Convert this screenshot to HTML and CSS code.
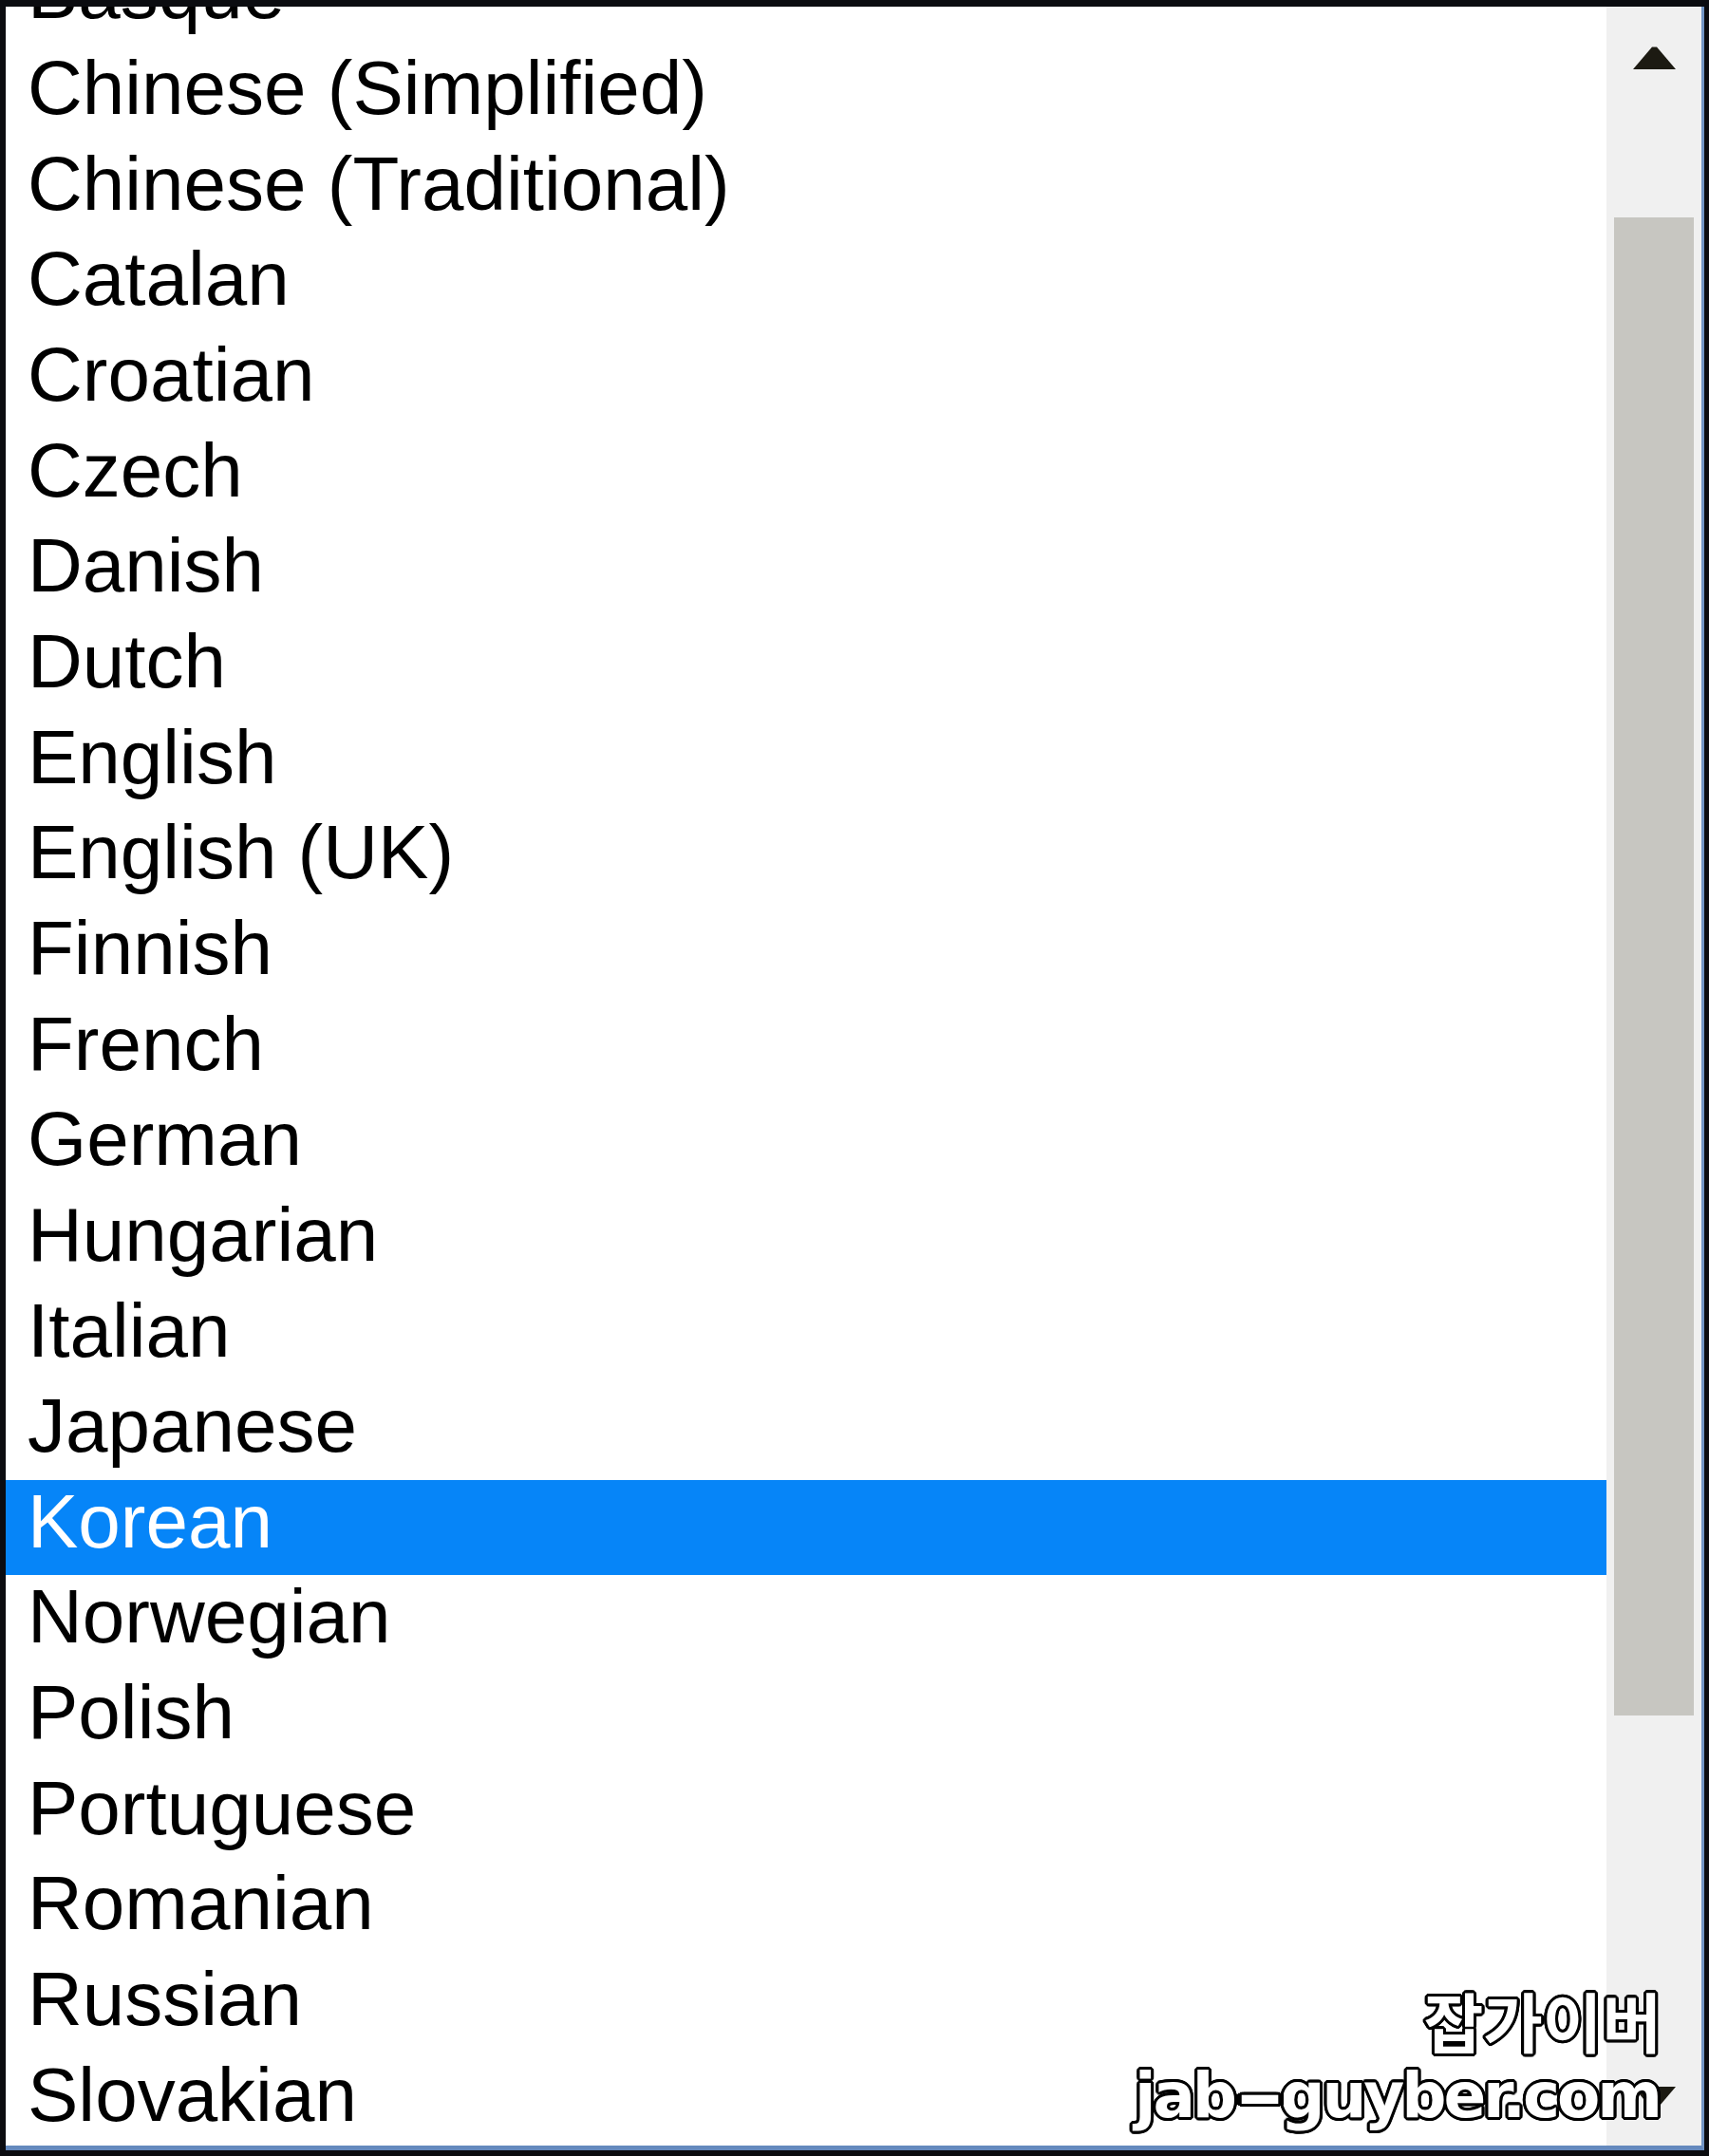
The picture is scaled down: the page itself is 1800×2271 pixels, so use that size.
FILE: index.html
```html
<!DOCTYPE html>
<html lang="en">
<head>
<meta charset="utf-8">
<title>Language list</title>
<link rel="stylesheet" href="styles.css">
</head>
<body>
<div class="frame">
  <div class="window">
    <ul class="list">
      <li class="item">Basque</li>
      <li class="item">Chinese (Simplified)</li>
      <li class="item">Chinese (Traditional)</li>
      <li class="item">Catalan</li>
      <li class="item">Croatian</li>
      <li class="item">Czech</li>
      <li class="item">Danish</li>
      <li class="item">Dutch</li>
      <li class="item">English</li>
      <li class="item">English (UK)</li>
      <li class="item">Finnish</li>
      <li class="item">French</li>
      <li class="item">German</li>
      <li class="item">Hungarian</li>
      <li class="item">Italian</li>
      <li class="item">Japanese</li>
      <li class="item item-selected">Korean</li>
      <li class="item">Norwegian</li>
      <li class="item">Polish</li>
      <li class="item">Portuguese</li>
      <li class="item">Romanian</li>
      <li class="item">Russian</li>
      <li class="item">Slovakian</li>
    </ul>
    <div class="scrollbar">
      <div class="sb-btn sb-up">
        <svg class="sb-arrow" width="45" height="25" viewBox="0 0 45 25"><polygon points="0,25 20,1.5 25,1.5 45,25" fill="#1c1a12"/></svg>
      </div>
      <div class="sb-track">
        <div class="sb-thumb"></div>
      </div>
      <div class="sb-btn sb-down">
        <svg class="sb-arrow" width="45" height="25" viewBox="0 0 45 25"><polygon points="0,0 45,0 25,23.5 20,23.5" fill="#1c1a12"/></svg>
      </div>
    </div>
  </div>
  <div class="watermark">
    <div class="wm-ko">잡가이버</div>
    <div class="wm-en">jab<span class="wm-dash">-</span>guyber.com</div>
  </div>
</div>
</body>
</html>
```

FILE: styles.css
```css
html, body {
  margin: 0;
  padding: 0;
  background: #0b0c10;
}

body {
  width: 1800px;
  height: 2271px;
  overflow: hidden;
}

.frame {
  position: relative;
  box-sizing: border-box;
  width: 1800px;
  height: 2271px;
  padding: 7px 5px 6px 6px;
  background: #0b0c10;
}

.window {
  display: flex;
  height: 100%;
  box-sizing: border-box;
  background: #ffffff;
  border-right: 3px solid #7194c4;
  border-bottom: 5px solid #6489bd;
}

.list {
  flex: 1;
  margin: 0;
  padding: 0;
  list-style: none;
  overflow: hidden;
}

.item {
  height: 100.67px;
  line-height: 88.6px;
  padding-left: 23px;
  font-family: "Liberation Sans", Arial, sans-serif;
  font-size: 80px;
  color: #000000;
  white-space: nowrap;
}

.item:first-child {
  margin-top: -58.7px;
}

.item-selected {
  background: #0685f8;
  color: #ffffff;
}

.scrollbar {
  width: 100px;
  display: flex;
  flex-direction: column;
  background: #f0f0f0;
}

.sb-btn {
  height: 100px;
  box-sizing: border-box;
  display: flex;
  justify-content: center;
}

.sb-up {
  padding-top: 41px;
}

.sb-down {
  padding-top: 38px;
}

.sb-arrow {
  display: block;
}

.sb-track {
  flex: 1;
  padding-top: 122px;
}

.sb-thumb {
  height: 1578px;
  margin: 0 8px;
  background: #c7c6c1;
}

.watermark {
  position: absolute;
  right: 50px;
  top: 2088px;
  text-align: right;
  color: #ffffff;
  font-weight: bold;
  text-shadow:
    3px 0 0 #000, -3px 0 0 #000, 0 3px 0 #000, 0 -3px 0 #000,
    2px 2px 0 #000, -2px 2px 0 #000, 2px -2px 0 #000, -2px -2px 0 #000,
    3px 1px 0 #000, -3px 1px 0 #000, 3px -1px 0 #000, -3px -1px 0 #000,
    1px 3px 0 #000, -1px 3px 0 #000, 1px -3px 0 #000, -1px -3px 0 #000;
}

.wm-ko {
  font-family: "Noto Sans CJK KR", sans-serif;
  font-size: 68px;
  line-height: 80px;
  letter-spacing: 0;
}

.wm-en {
  font-family: "DejaVu Sans", sans-serif;
  font-size: 66px;
  line-height: 80px;
  letter-spacing: -3.1px;
  margin-right: 2px;
}

.wm-dash {
  display: inline-block;
  transform: scaleX(1.9);
  margin: 0 12px;
}
```
